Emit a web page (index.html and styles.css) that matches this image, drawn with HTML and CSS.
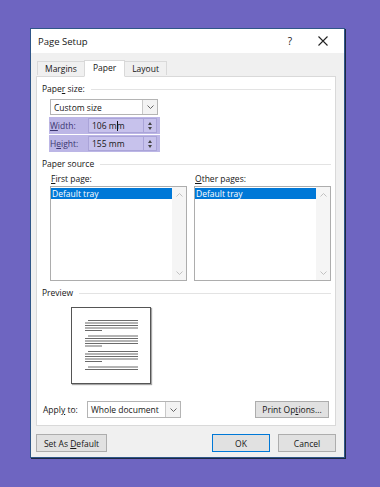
FILE: index.html
```html
<!DOCTYPE html>
<html lang="en">
<head>
  <meta charset="UTF-8" />
  <title>Page Setup</title>
  <link rel="stylesheet" href="styles.css">
</head>
<body>
  <div class="dialog">
    <div class="titlebar">
      <span class="title">Page Setup</span>
      <span class="help">?</span>
      <span class="close">
        <svg width="10" height="10" viewBox="0 0 10 10"><path d="M0.5 0.5L9.5 9.5M9.5 0.5L0.5 9.5" stroke="#222" stroke-width="1.1"/></svg>
      </span>
    </div>

    <div class="body">
      <div class="tabs">
        <div class="tab">Margins</div>
        <div class="tab active">Paper</div>
        <div class="tab">Layout</div>
      </div>

      <div class="panel">
        <div class="group-title"><span>Pape<u>r</u> size:</span></div>
        <div class="paper-size">
          <div class="combo size-combo">
            <span class="combo-text">Custom size</span>
            <span class="combo-btn"><svg width="7" height="4" viewBox="0 0 7 4"><path d="M0.5 0.5L3.5 3.5L6.5 0.5" fill="none" stroke="#555" stroke-width="0.9"/></svg></span>
          </div>
          <div class="dim-row">
            <span class="dim-label"><u>W</u>idth:</span>
            <span class="dim-input"><span>106 m<i class="caret"></i>m</span></span>
            <span class="spin"><i class="up"></i><i class="down"></i></span>
          </div>
          <div class="dim-row">
            <span class="dim-label">H<u>e</u>ight:</span>
            <span class="dim-input">155 mm</span>
            <span class="spin"><i class="up"></i><i class="down"></i></span>
          </div>
        </div>

        <div class="group-title"><span>Paper source</span></div>
        <div class="sources">
          <div class="source">
            <div class="source-label"><u>F</u>irst page:</div>
            <div class="listbox">
              <div class="items"><div class="item selected">Default tray</div></div>
              <div class="scroll">
                <svg width="7" height="4" viewBox="0 0 7 4"><path d="M0.5 3.5L3.5 0.5L6.5 3.5" fill="none" stroke="#bbb" stroke-width="0.9"/></svg>
                <svg width="7" height="4" viewBox="0 0 7 4"><path d="M0.5 0.5L3.5 3.5L6.5 0.5" fill="none" stroke="#bbb" stroke-width="0.9"/></svg>
              </div>
            </div>
          </div>
          <div class="source">
            <div class="source-label"><u>O</u>ther pages:</div>
            <div class="listbox">
              <div class="items"><div class="item selected">Default tray</div></div>
              <div class="scroll">
                <svg width="7" height="4" viewBox="0 0 7 4"><path d="M0.5 3.5L3.5 0.5L6.5 3.5" fill="none" stroke="#bbb" stroke-width="0.9"/></svg>
                <svg width="7" height="4" viewBox="0 0 7 4"><path d="M0.5 0.5L3.5 3.5L6.5 0.5" fill="none" stroke="#bbb" stroke-width="0.9"/></svg>
              </div>
            </div>
          </div>
        </div>

        <div class="group-title"><span>Preview</span></div>
        <div class="preview">
          <svg width="78" height="75" viewBox="0 0 78 75">
            <g fill="#6a6a6a">
              <rect x="16" y="12" width="50" height="1"/>
              <rect x="13" y="14.5" width="53" height="1"/>
              <rect x="13" y="17" width="53" height="1"/>
              <rect x="13" y="19.5" width="53" height="1"/>
              <rect x="13" y="22" width="17" height="1"/>

              <rect x="16" y="27.5" width="50" height="1"/>
              <rect x="13" y="30" width="53" height="1"/>
              <rect x="13" y="32.5" width="53" height="1"/>
              <rect x="13" y="35" width="53" height="1"/>
              <rect x="13" y="37.5" width="17" height="1"/>

              <rect x="16" y="43" width="50" height="1"/>
              <rect x="13" y="45.5" width="53" height="1"/>
              <rect x="13" y="48" width="53" height="1"/>
              <rect x="13" y="50.5" width="53" height="1"/>
              <rect x="13" y="53" width="17" height="1"/>

              <rect x="16" y="58.5" width="50" height="1"/>
              <rect x="13" y="61" width="53" height="1"/>
            </g>
          </svg>
        </div>

        <div class="apply-row">
          <span class="apply-label">Appl<u>y</u> to:</span>
          <div class="combo apply-combo">
            <span class="combo-text">Whole document</span>
            <span class="combo-btn"><svg width="7" height="4" viewBox="0 0 7 4"><path d="M0.5 0.5L3.5 3.5L6.5 0.5" fill="none" stroke="#555" stroke-width="0.9"/></svg></span>
          </div>
          <button class="btn print-btn">Print Op<u>t</u>ions...</button>
        </div>
      </div>

      <div class="footer">
        <button class="btn default-btn">Set As <u>D</u>efault</button>
        <div class="footer-right">
          <button class="btn ok-btn">OK</button>
          <button class="btn">Cancel</button>
        </div>
      </div>
    </div>
  </div>
</body>
</html>
```

FILE: styles.css
```css
* {
  margin: 0;
  padding: 0;
  box-sizing: border-box;
}

body {
  background-color: #6e65c1;
  font-family: 'Open Sans', 'Noto Sans', sans-serif;
  font-size: 8.5px;
  color: #161616;
  padding: 28px 0 0 30px;
  height: 487px;
  overflow: hidden;
}

u {
  text-decoration: underline;
  text-underline-offset: 1px;
}

.dialog {
  width: 315px;
  height: 430px;
  border: 1px solid #2f5688;
  box-shadow: 1px 1px 0 #1b2944;
  background-color: #f0f0f0;
  display: flex;
  flex-direction: column;
}

/* title bar */
.titlebar {
  height: 24px;
  background-color: #ffffff;
  display: flex;
  align-items: center;
  padding-left: 7px;
}

.title {
  font-size: 9.5px;
  flex: 1;
}

.help {
  font-size: 10px;
  width: 12px;
  text-align: center;
  margin-right: 22px;
}

.close {
  width: 10px;
  height: 10px;
  display: flex;
  margin-right: 16px;
}

/* body */
.body {
  flex: 1;
  padding: 6px 8px 0 5px;
  display: flex;
  flex-direction: column;
}

.tabs {
  display: flex;
  align-items: flex-end;
  height: 17px;
  padding-left: 1px;
  position: relative;
  z-index: 1;
}

.tab {
  height: 14px;
  padding: 0 7px;
  border: 1px solid #d9d9d9;
  border-bottom: none;
  background-color: #f0f0f0;
  display: flex;
  align-items: center;
  margin-bottom: 1px;
}

.tab.active {
  height: 17px;
  margin-bottom: -1px;
  background-color: #ffffff;
  padding: 0 8px 2px;
  border-bottom: 1px solid #ffffff;
}

.tab + .tab {
  margin-left: -1px;
}

.panel {
  height: 350px;
  background-color: #ffffff;
  border: 1px solid #d9d9d9;
  padding: 0 4px 0 5px;
}

.group-title {
  height: 12px;
  line-height: 12px;
  display: flex;
  align-items: center;
  margin-top: 6px;
}

.group-title::after {
  content: "";
  flex: 1;
  height: 1px;
  background-color: #e3e3e3;
  margin-left: 6px;
}

/* paper size */
.paper-size {
  margin: 4px 0 0 8px;
  width: 108px;
}

.combo {
  height: 16px;
  border: 1px solid #b4b4b4;
  background-color: #ffffff;
  display: flex;
  align-items: center;
}

.combo-text {
  flex: 1;
  padding-left: 3px;
  white-space: nowrap;
}

.combo-btn {
  width: 15px;
  height: 100%;
  border-left: 1px solid #c8c8c8;
  background-color: #f3f3f3;
  display: flex;
  align-items: center;
  justify-content: center;
}

.dim-row {
  height: 17px;
  margin: 2px -2px 0 -1px;
  background-color: #bcb6e6;
  display: flex;
  align-items: center;
  padding: 1px 3px 1px 1px;
}

.dim-row + .dim-row {
  margin-top: 1px;
}

.dim-label {
  width: 38px;
  color: #3b3570;
}

.dim-input {
  flex: 1;
  height: 100%;
  background-color: #c7c2ec;
  border: 1px solid #aaa4d8;
  display: flex;
  align-items: center;
  padding-left: 3px;
}

.caret {
  display: inline-block;
  width: 1px;
  height: 10px;
  background-color: #111;
  vertical-align: -2px;
  margin-right: -1px;
}

.spin {
  width: 13px;
  height: 100%;
  border: 1px solid #aaa4d8;
  border-left: none;
  background-color: #c7c2ec;
  display: flex;
  flex-direction: column;
  justify-content: center;
  align-items: center;
  gap: 2px;
}

.spin i {
  width: 0;
  height: 0;
  border-left: 2.5px solid transparent;
  border-right: 2.5px solid transparent;
}

.spin .up {
  border-bottom: 3px solid #444;
}

.spin .down {
  border-top: 3px solid #444;
}

/* paper source */
.sources {
  display: flex;
  gap: 7px;
  margin: 3px 0 0 8px;
}

.source {
  width: 137px;
}

.source-label {
  height: 12px;
  line-height: 12px;
  padding-left: 1px;
  margin-bottom: 1px;
}

.listbox {
  height: 95px;
  border: 1px solid #adadad;
  display: flex;
}

.items {
  flex: 1;
  padding-top: 1px;
}

.item.selected {
  background-color: #0078d7;
  color: #ffffff;
  height: 11px;
  line-height: 11px;
  padding-left: 1px;
}

.scroll {
  width: 14px;
  background-color: #f5f5f5;
  display: flex;
  flex-direction: column;
  justify-content: space-between;
  align-items: center;
  padding: 6px 0 5px;
}

/* preview */
.preview {
  width: 80px;
  height: 77px;
  margin: 8px 0 0 29px;
  border: 1px solid #555;
  box-shadow: 1px 1px 1px rgba(0, 0, 0, 0.35);
  background-color: #ffffff;
}

.preview svg {
  display: block;
}

/* apply row */
.apply-row {
  display: flex;
  align-items: center;
  margin-top: 17px;
  padding-left: 1px;
}

.apply-label {
  width: 44px;
}

.apply-combo {
  width: 94px;
  height: 17px;
}

.btn {
  font-family: 'Open Sans', 'Noto Sans', sans-serif;
  font-size: 8.5px;
  color: #161616;
  height: 18px;
  background-color: #e1e1e1;
  border: 1px solid #adadad;
  padding: 0 6px;
}

.print-btn {
  margin-left: auto;
  margin-right: 2px;
  width: 74px;
  height: 17px;
}

/* footer */
.footer {
  display: flex;
  margin-top: 8px;
}

.default-btn {
  width: 71px;
}

.footer-right {
  margin-left: auto;
  display: flex;
  gap: 8px;
}

.footer-right .btn {
  width: 58px;
}

.ok-btn {
  border-color: #0078d7;
}
```
